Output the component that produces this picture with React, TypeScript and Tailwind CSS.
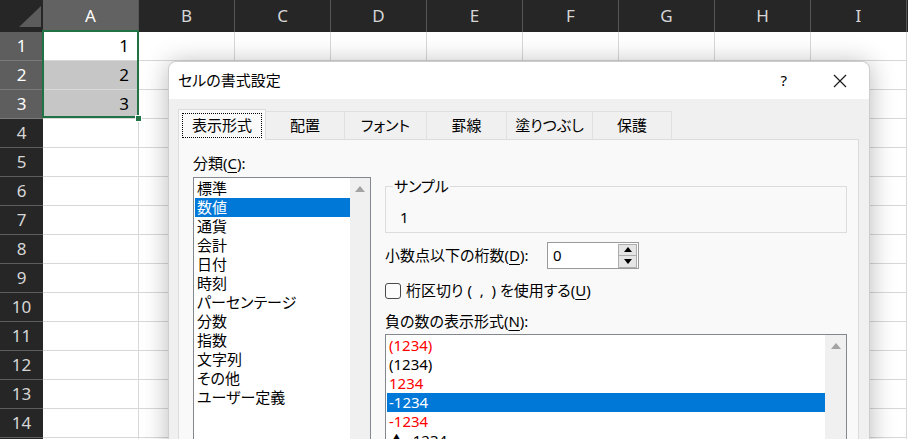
import React from "react";

const cols = ["A", "B", "C", "D", "E", "F", "G", "H", "I"];
const rows = Array.from({ length: 15 }, (_, i) => i + 1);

const categories = [
  "標準",
  "数値",
  "通貨",
  "会計",
  "日付",
  "時刻",
  "パーセンテージ",
  "分数",
  "指数",
  "文字列",
  "その他",
  "ユーザー定義",
];

const negatives = [
  { label: "(1234)", red: true, selected: false },
  { label: "(1234)", red: false, selected: false },
  { label: "1234", red: true, selected: false },
  { label: "-1234", red: false, selected: true },
  { label: "-1234", red: true, selected: false },
  { label: "▲ -1234", red: false, selected: false },
];

const tabs = ["配置", "フォント", "罫線", "塗りつぶし", "保護"];
const tabWidths = ["w-[79px]", "w-[82px]", "w-[80px]", "w-[86px]", "w-[79px]"];

const UpArrow = () => (
  <svg width="10" height="6" viewBox="0 0 10 6">
    <path d="M5 0L10 6H0Z" fill="#a3a3a3" />
  </svg>
);

const Key = ({ k }: { k: string }) => (
  <span className="underline underline-offset-[3px] decoration-1">{k}</span>
);

export default function App() {
  return (
    <div className="relative w-[908px] h-[439px] overflow-hidden bg-white font-['Noto_Sans',sans-serif]">
      {/* Column headers */}
      <div className="flex h-[32px] bg-[#262626]">
        <div className="w-[43px] h-full flex items-end justify-end pr-[2px] pb-[5px]">
          <svg width="22" height="21" viewBox="0 0 22 21">
            <path d="M22 0V21H0Z" fill="#5c5c5c" />
          </svg>
        </div>
        {cols.map((c) => (
          <div
            key={c}
            className={`w-[96px] h-full shrink-0 border-r border-[#565656] flex items-center justify-center text-[17px] ${
              c === "A" ? "bg-[#626262] text-white" : "text-[#d6d6d6]"
            }`}
          >
            {c}
          </div>
        ))}
      </div>

      {/* Grid rows */}
      {rows.map((r) => (
        <div key={r} className="flex h-[29px]">
          <div
            className={`w-[43px] shrink-0 h-full border-b border-[#5e5e5e] flex items-center justify-center text-[17px] ${
              r <= 3 ? "bg-[#5e5e5e] text-white border-[#7a7a7a]" : "bg-[#262626] text-[#d6d6d6]"
            }`}
          >
            {r < 15 ? r : ""}
          </div>
          {cols.map((c) => (
            <div
              key={c}
              className={`w-[96px] h-full shrink-0 border-r border-b border-[#d8d8d8] flex items-center justify-end pr-[9px] text-[17px] text-black ${
                c === "A" && (r === 2 || r === 3) ? "bg-[#c6c6c6]" : "bg-white"
              }`}
            >
              {c === "A" && r <= 3 ? r : ""}
            </div>
          ))}
        </div>
      ))}

      {/* Selection border */}
      <div className="absolute left-[42px] top-[30px] w-[97px] h-[88px] border-2 border-[#217346]" />
      <div className="absolute left-[135px] top-[115px] w-[7px] h-[7px] bg-[#217346] border border-white" />

      {/* Format Cells dialog */}
      <div className="absolute left-[168px] top-[61px] w-[702px] h-[400px] rounded-t-[8px] bg-[#f0f0f0] border border-[#cdcdcd] shadow-[0_2px_26px_rgba(0,0,0,0.28)] font-['Noto_Sans','Noto_Sans_CJK_JP',sans-serif] [font-feature-settings:'palt'] text-black">
        {/* Title bar */}
        <div className="h-[37px] bg-white rounded-t-[8px] flex items-center justify-between pl-[9px] pr-[22px]">
          <span className="text-[15px] leading-[19px]">セルの書式設定</span>
          <div className="flex items-center gap-[46px]">
            <span className="text-[15px] leading-[19px]">?</span>
            <svg width="14" height="14" viewBox="0 0 14 14">
              <path d="M1 1L13 13M13 1L1 13" stroke="#1a1a1a" strokeWidth="1.2" />
            </svg>
          </div>
        </div>

        <div className="pt-[10px] pl-[9px]">
          {/* Tabs */}
          <div className="flex items-end h-[30px]">
            <div className="relative z-10 -mb-px w-[88px] h-[31px] bg-[#f9f9f9] border border-b-0 border-[#dcdcdc] pt-[3px] px-[3px]">
              <div className="h-[25px] border border-dotted border-black flex items-center justify-center text-[15px] leading-[19px]">
                表示形式
              </div>
            </div>
            {tabs.map((t, i) => (
              <div
                key={t}
                className={`${tabWidths[i]} h-[28px] bg-[#f0f0f0] border border-l-0 border-b-0 border-[#e0e0e0] flex items-center justify-center text-[15px] leading-[19px]`}
              >
                {t}
              </div>
            ))}
          </div>

          {/* Panel */}
          <div className="w-[681px] h-[340px] bg-[#f9f9f9] border border-[#dcdcdc] flex pl-[14px] pt-[14px]">
            {/* Category list */}
            <div className="w-[178px] shrink-0">
              <div className="text-[15px] leading-[19px]">
                分類(<Key k="C" />):
              </div>
              <div className="mt-[4px] h-[300px] border border-[#828790] bg-white flex">
                <div className="flex-1 pt-[1px] pl-[1px]">
                  {categories.map((c, i) => (
                    <div
                      key={c}
                      className={`h-[19px] leading-[19px] text-[15px] pl-[2px] ${
                        i === 1 ? "bg-[#0078d7] text-white" : ""
                      }`}
                    >
                      {c}
                    </div>
                  ))}
                </div>
                <div className="w-[20px] bg-[#f0f0f0] flex justify-center pt-[8px]">
                  <UpArrow />
                </div>
              </div>
            </div>

            {/* Right side */}
            <div className="ml-[14px] w-[462px]">
              <div className="relative mt-[32px] h-[47px] border border-[#dcdcdc] flex items-end pl-[14px] pb-[5px]">
                <span className="absolute -top-[10px] left-[7px] px-[1px] bg-[#f9f9f9] text-[15px] leading-[19px]">
                  サンプル
                </span>
                <span className="text-[15px] leading-[19px]">1</span>
              </div>

              <div className="mt-[9px] flex items-center h-[27px]">
                <span className="w-[162px] text-[15px] leading-[19px]">
                  小数点以下の桁数(<Key k="D" />):
                </span>
                <div className="w-[92px] h-[27px] border border-[#9a9a9a] bg-white flex items-center pl-[5px] pr-[1px]">
                  <span className="flex-1 text-[15px] leading-[19px]">0</span>
                  <div className="w-[19px] h-[24px] flex flex-col">
                    <div className="flex-1 bg-[#e5e5e5] border border-[#adadad] flex items-center justify-center">
                      <svg width="8" height="5" viewBox="0 0 8 5">
                        <path d="M4 0L8 5H0Z" fill="#000" />
                      </svg>
                    </div>
                    <div className="flex-1 bg-[#e5e5e5] border border-t-0 border-[#adadad] flex items-center justify-center">
                      <svg width="8" height="5" viewBox="0 0 8 5">
                        <path d="M0 0H8L4 5Z" fill="#000" />
                      </svg>
                    </div>
                  </div>
                </div>
              </div>

              <div className="mt-[12px] h-[19px] flex items-center gap-[5px]">
                <div className="w-[16px] h-[16px] rounded-[3px] border border-[#4a4a4a] bg-[#fbfbfb]" />
                <span className="text-[15px] leading-[19px] whitespace-pre">
                  桁区切り (  ,  ) を使用する(<Key k="U" />)
                </span>
              </div>

              <div className="mt-[12px] text-[15px] leading-[19px]">
                負の数の表示形式(<Key k="N" />):
              </div>

              <div className="mt-[3px] h-[200px] border border-[#828790] bg-white flex">
                <div className="flex-1 pt-[1px] pl-[1px]">
                  {negatives.map((n, i) => (
                    <div
                      key={i}
                      className={`h-[19px] leading-[19px] text-[15px] pl-[2px] ${
                        n.selected ? "bg-[#0078d7] text-white" : n.red ? "text-[#ff0000]" : "text-black"
                      }`}
                    >
                      {n.label}
                    </div>
                  ))}
                </div>
                <div className="w-[21px] bg-[#f0f0f0] flex justify-center pt-[8px]">
                  <UpArrow />
                </div>
              </div>
            </div>
          </div>
        </div>
      </div>
    </div>
  );
}
